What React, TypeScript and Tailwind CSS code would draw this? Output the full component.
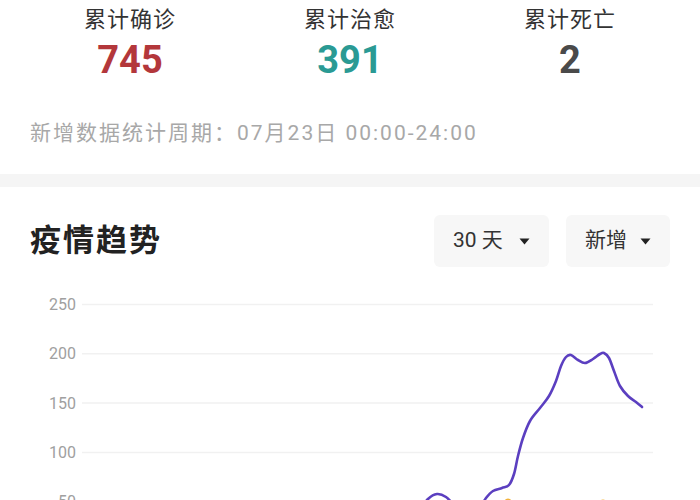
import React from "react";

type Stat = { label: string; value: string; color: string };

const stats: Stat[] = [
  { label: "累计确诊", value: "745", color: "text-[#b3373b]" },
  { label: "累计治愈", value: "391", color: "text-[#2a9a94]" },
  { label: "累计死亡", value: "2", color: "text-[#4a4a4a]" },
];

// chart coords are page coords minus the svg top (290)
const TOP = 290;
const ticks = [250, 200, 150, 100, 50];
const yOf = (v: number) => 551 - v * 0.986 - TOP;

const purple: [number, number][] = [
  [405, 530], [418, 512], [428, 499], [437, 494], [446, 497], [455, 506], [466, 516],
  [478, 510], [486, 498], [493, 491], [502, 488], [509, 485], [514, 474], [518, 456],
  [523, 438], [530, 421], [540, 408], [549, 396], [556, 381], [561, 366], [566, 357],
  [571, 355], [578, 360], [585, 363], [593, 359], [600, 354], [604, 353], [609, 358],
  [614, 371], [620, 386], [628, 396], [636, 402], [642, 407],
];

// catmull-rom -> cubic bezier so the line is smooth like the reference
function smooth(pts: [number, number][]) {
  const p = pts.map(([x, y]) => [x, y - TOP] as [number, number]);
  let d = `M${p[0][0]},${p[0][1]}`;
  for (let i = 0; i < p.length - 1; i++) {
    const p0 = p[i - 1] || p[i];
    const p1 = p[i];
    const p2 = p[i + 1];
    const p3 = p[i + 2] || p2;
    const c1x = p1[0] + (p2[0] - p0[0]) / 6;
    const c1y = p1[1] + (p2[1] - p0[1]) / 6;
    const c2x = p2[0] - (p3[0] - p1[0]) / 6;
    const c2y = p2[1] - (p3[1] - p1[1]) / 6;
    d += ` C${c1x},${c1y} ${c2x},${c2y} ${p2[0]},${p2[1]}`;
  }
  return d;
}

function Caret() {
  return (
    <svg width="11" height="7" viewBox="0 0 11 7">
      <path d="M0.5 0.5 L10.5 0.5 L5.5 6.5 Z" fill="#222" />
    </svg>
  );
}

export default function App() {
  return (
    <div className="w-[700px] h-[500px] overflow-hidden bg-white font-['Roboto','Noto_Sans_CJK_SC',sans-serif]">
      {/* totals */}
      <div className="grid grid-cols-3 px-5 pt-[6px]">
        {stats.map((s) => (
          <div key={s.label} className="flex flex-col items-center">
            <div className="text-[22px] leading-[28px] text-[#333] tracking-[1px]">{s.label}</div>
            <div className={`text-[38px] leading-[44px] font-bold mt-[4px] ${s.color}`}>{s.value}</div>
          </div>
        ))}
      </div>

      <div className="mt-[37px] px-[30px] text-[21px] leading-[28px] text-[#a8a8a8] tracking-[2px]">
        新增数据统计周期：07月23日 00:00-24:00
      </div>

      <div className="mt-[27px] h-[13px] bg-[#f5f5f5]" />

      {/* trend header */}
      <div className="pt-[28px] px-[30px] flex items-center justify-between">
        <h2 className="text-[31px] leading-[40px] font-bold text-[#222] tracking-[2px]">疫情趋势</h2>
        <div className="flex gap-[17px]">
          <button className="w-[115px] h-[52px] px-[19px] rounded-md bg-[#f7f7f7] flex items-center justify-between text-[21px] text-[#333]">
            <span>30 天</span>
            <Caret />
          </button>
          <button className="w-[104px] h-[52px] px-[19px] rounded-md bg-[#f7f7f7] flex items-center justify-between text-[21px] text-[#333]">
            <span>新增</span>
            <Caret />
          </button>
        </div>
      </div>

      {/* chart */}
      <svg width="700" height="240" className="mt-[23px] block">
        {ticks.map((t) => (
          <g key={t}>
            <line x1="82" x2="653" y1={yOf(t)} y2={yOf(t)} stroke="#f1f1f1" strokeWidth="1.5" />
            <text
              x="76"
              y={yOf(t) + 5.5}
              textAnchor="end"
              fontSize="16"
              fill="#a0a0a0"
              fontFamily="Roboto, sans-serif"
            >
              {t}
            </text>
          </g>
        ))}
        <path d={smooth(purple)} fill="none" stroke="#5b3fc0" strokeWidth="2.6" strokeLinejoin="round" strokeLinecap="round" />
        <circle cx="508" cy={502 - TOP} r="3.5" fill="#f2b33a" />
        <circle cx="603" cy={503 - TOP} r="3.5" fill="#f2b33a" />
      </svg>
    </div>
  );
}
